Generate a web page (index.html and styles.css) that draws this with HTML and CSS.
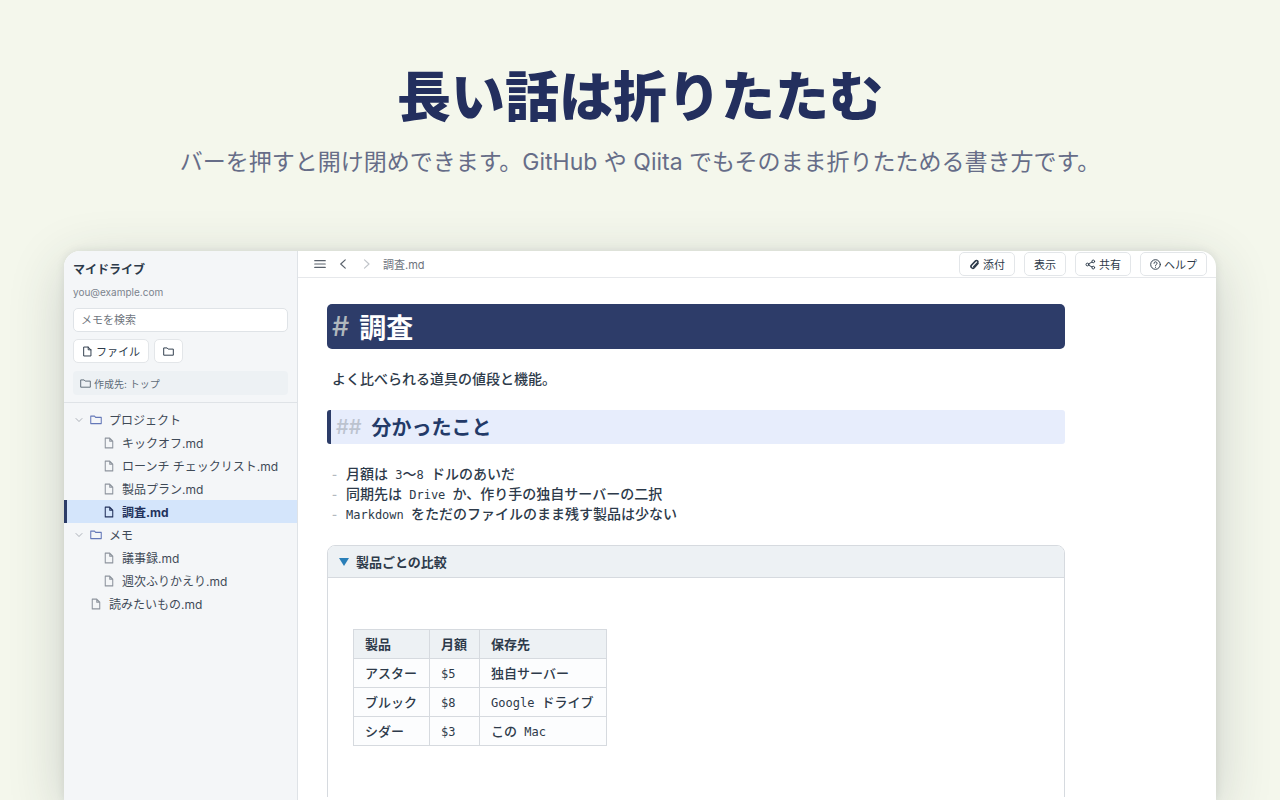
FILE: index.html
```html
<!DOCTYPE html>
<html lang="ja">
<head>
  <meta charset="UTF-8">
  <meta name="viewport" content="width=device-width, initial-scale=1.0">
  <title>長い話は折りたたむ</title>
  <link rel="stylesheet" href="styles.css">
</head>
<body>
  <svg class="sprite" aria-hidden="true">
    <symbol id="file" viewBox="0 0 16 16">
      <path d="M3 1.500h6l4 4v9h-10zM9 1.500v4h4"/>
    </symbol>
    <symbol id="folder" viewBox="0 0 16 16">
      <path d="M1 12.800v-10h5l1.500 1.700h7.500v8.300z"/>
    </symbol>
    <symbol id="down" viewBox="0 0 16 16">
      <path d="M2 5l6 6 6-6"/>
    </symbol>
  </svg>

  <header class="hero">
    <h1>長い話は折りたたむ</h1>
    <p>バーを押すと開け閉めできます。GitHub や Qiita でもそのまま折りたためる書き方です。</p>
  </header>

  <div class="app">
    <aside class="sidebar">
      <div class="sidebar-head">
        <h2 class="drive">マイドライブ</h2>
        <p class="email">you@example.com</p>
        <input class="search" type="search" placeholder="メモを検索" aria-label="メモを検索">
        <div class="actions">
          <button class="btn"><svg class="icon"><use href="#file"/></svg>ファイル</button>
          <button class="btn" aria-label="フォルダ"><svg class="icon"><use href="#folder"/></svg></button>
        </div>
        <p class="target"><svg class="icon"><use href="#folder"/></svg>作成先: トップ</p>
      </div>

      <nav class="tree">
        <a href="#" class="row folder"><svg class="caret"><use href="#down"/></svg><svg class="icon"><use href="#folder"/></svg>プロジェクト</a>
        <a href="#" class="row nested"><svg class="icon"><use href="#file"/></svg>キックオフ.md</a>
        <a href="#" class="row nested"><svg class="icon"><use href="#file"/></svg>ローンチ チェックリスト.md</a>
        <a href="#" class="row nested"><svg class="icon"><use href="#file"/></svg>製品プラン.md</a>
        <a href="#" class="row nested active"><svg class="icon"><use href="#file"/></svg>調査.md</a>
        <a href="#" class="row folder"><svg class="caret"><use href="#down"/></svg><svg class="icon"><use href="#folder"/></svg>メモ</a>
        <a href="#" class="row nested"><svg class="icon"><use href="#file"/></svg>議事録.md</a>
        <a href="#" class="row nested"><svg class="icon"><use href="#file"/></svg>週次ふりかえり.md</a>
        <a href="#" class="row root"><svg class="icon"><use href="#file"/></svg>読みたいもの.md</a>
      </nav>
    </aside>

    <main class="main">
      <div class="topbar">
        <button class="nav-btn" aria-label="メニュー"><svg viewBox="0 0 16 16"><path d="M1 3.500h14M1 8h14M1 12.500h14"/></svg></button>
        <button class="nav-btn" aria-label="戻る"><svg viewBox="0 0 16 16"><path d="M11 2.500l-6 5.500 6 5.500"/></svg></button>
        <button class="nav-btn" aria-label="進む" disabled><svg viewBox="0 0 16 16"><path d="M6 2.500l6 5.500-6 5.500"/></svg></button>
        <span class="crumb">調査.md</span>
        <div class="tools">
          <button class="btn"><svg class="icon" viewBox="0 0 16 16"><path class="clip" d="M13 6.500l-5.500 6.200a2.700 2.700 0 0 1-4-3.600l6-6.300a2 2 0 0 1 3 2.700l-5.500 5.700"/></svg>添付</button>
          <button class="btn">表示</button>
          <button class="btn"><svg class="icon" viewBox="0 0 16 16"><circle cx="3.500" cy="8" r="2"/><circle cx="12" cy="3.500" r="2"/><circle cx="12" cy="12.500" r="2"/><path d="M5.300 7l5-2.600M5.300 9l5 2.600"/></svg>共有</button>
          <button class="btn"><svg class="icon" viewBox="0 0 16 16"><circle cx="8" cy="8" r="7"/><path d="M5.800 6.300a2.200 2.200 0 1 1 3.300 1.900q-1.100.6-1.100 1.300M8 11.800v.4"/></svg>ヘルプ</button>
        </div>
      </div>

      <article class="doc">
        <h1><span class="mark">#</span> 調査</h1>
        <p>よく比べられる道具の値段と機能。</p>
        <h2><span class="mark">##</span> 分かったこと</h2>
        <ul>
          <li>月額は<code> 3</code>〜<code>8 </code>ドルのあいだ</li>
          <li>同期先は<code> Drive </code>か、作り手の独自サーバーの二択</li>
          <li><code>Markdown </code>をただのファイルのまま残す製品は少ない</li>
        </ul>
        <details open>
          <summary>製品ごとの比較</summary>
          <div class="details-body">
            <table>
              <thead>
                <tr><th>製品</th><th>月額</th><th>保存先</th></tr>
              </thead>
              <tbody>
                <tr><td>アスター</td><td><code>$5</code></td><td>独自サーバー</td></tr>
                <tr><td>ブルック</td><td><code>$8</code></td><td><code>Google </code>ドライブ</td></tr>
                <tr><td>シダー</td><td><code>$3</code></td><td>この<code> Mac</code></td></tr>
              </tbody>
            </table>
          </div>
        </details>
      </article>
    </main>
  </div>
</body>
</html>
```

FILE: styles.css
```css
* {
  box-sizing: border-box;
}

body {
  margin: 0;
  height: 100vh;
  display: flex;
  flex-direction: column;
  overflow: hidden;
  background: #f4f7ec;
  color: #2d3a4a;
  font-family: Inter, "Noto Sans CJK JP", sans-serif;
  font-size: 12px;
}

h1, h2, p, ul {
  margin: 0;
}

button, input {
  font: inherit;
  color: inherit;
}

svg {
  fill: none;
  stroke: currentColor;
  stroke-width: 1.4;
  stroke-linecap: round;
  stroke-linejoin: round;
  flex: none;
}

.sprite {
  display: none;
}

.icon {
  width: 11px;
  height: 11px;
}

/* hero */

.hero {
  padding: 62px 64px 0;
  text-align: center;
}

.hero h1 {
  font-size: 54px;
  line-height: 72px;
  font-weight: 800;
  color: #232f5e;
}

.hero p {
  margin-top: 10px;
  font-size: 23px;
  line-height: 36px;
  color: #666d88;
}

/* window */

.app {
  flex: 1;
  min-height: 0;
  margin: 71px 64px 0;
  display: flex;
  overflow: hidden;
  background: #fff;
  border-radius: 16px 16px 0 0;
  box-shadow: 0 0 8px rgba(40, 50, 60, 0.1), 0 14px 56px rgba(40, 50, 60, 0.2);
}

.sidebar {
  width: 234px;
  flex: none;
  background: #f4f6f8;
  border-right: 1px solid #dfe3e7;
}

.sidebar-head {
  padding: 10px 9px 7px;
  border-bottom: 1px solid #dfe3e7;
}

.drive {
  font-size: 12px;
  line-height: 18px;
}

.email {
  margin-top: 5px;
  font-size: 10px;
  line-height: 16px;
  color: #7b838d;
}

.search {
  display: block;
  width: 100%;
  height: 24px;
  margin-top: 8px;
  padding: 0 7px;
  border: 1px solid #dfe3e7;
  border-radius: 5px;
  background: #fff;
  font-size: 11px;
}

.search::placeholder {
  color: #70767e;
}

.actions {
  display: flex;
  gap: 5px;
  margin: 7px 0 8px;
}

.btn {
  height: 24px;
  display: flex;
  align-items: center;
  gap: 3px;
  padding: 0 8px;
  border: 1px solid #e3e6e9;
  border-radius: 5px;
  background: #fff;
  font-size: 11px;
  white-space: nowrap;
}

.target {
  display: flex;
  align-items: center;
  gap: 3px;
  height: 24px;
  padding: 0 7px;
  border-radius: 4px;
  background: #edf1f4;
  color: #5f6b78;
  font-size: 10px;
}

.tree {
  padding-top: 5px;
}

.row {
  display: flex;
  align-items: center;
  gap: 7px;
  height: 23px;
  border-left: 3px solid transparent;
  color: #3f4a57;
  text-decoration: none;
}

.row .icon {
  width: 12px;
  height: 12px;
  color: #8d949d;
}

.folder {
  padding-left: 8px;
}

.folder .icon {
  color: #6478b8;
}

.row .caret {
  width: 8px;
  height: 8px;
  color: #8d949d;
}

.root {
  padding-left: 23px;
}

.nested {
  padding-left: 36px;
}

.active,
.active .icon {
  color: #22325c;
}

.active {
  background: #d4e5fb;
  border-left-color: #2c3c68;
  font-weight: 700;
}

/* editor */

.main {
  flex: 1;
  min-width: 0;
  display: flex;
  flex-direction: column;
  padding-bottom: 3px;
}

.topbar {
  display: flex;
  align-items: center;
  gap: 11px;
  flex: none;
  height: 27px;
  padding: 0 9px 0 16px;
  border-bottom: 1px solid #e6e8eb;
}

.nav-btn {
  display: flex;
  padding: 0;
  border: 0;
  background: none;
  color: #59616b;
}

.nav-btn svg {
  width: 12px;
  height: 12px;
  stroke-width: 1.6;
}

.nav-btn:disabled {
  color: #c0c4c9;
}

.crumb {
  font-size: 11px;
  color: #6d747d;
}

.tools {
  display: flex;
  gap: 9px;
  margin-left: auto;
}

.tools .btn {
  padding: 0 9px;
}

.clip {
  stroke-width: 2.4;
}

.doc {
  flex: 1;
  min-height: 0;
  overflow: hidden;
  max-width: 796px;
  padding: 26px 29px 0;
  font-family: "Noto Sans CJK JP", sans-serif;
  font-size: 14px;
  line-height: 20px;
  font-weight: 500;
}

.doc h1,
.doc h2 {
  display: flex;
  align-items: center;
  gap: 10px;
  padding: 0 5px;
}

.doc h1 {
  border-radius: 5px;
  background: #2d3c69;
  color: #fff;
  font-size: 27px;
  line-height: 45px;
}

.mark {
  font-family: Inter, sans-serif;
  font-weight: 500;
}

.doc h1 .mark {
  color: #b0b8bd;
}

.doc p {
  margin: 19px 5px 22px;
}

.doc h2 {
  border-left: 4px solid #2c3c68;
  border-radius: 3px;
  background: #e7edfc;
  color: #233a68;
  font-size: 20px;
  line-height: 34px;
}

.doc h2 .mark {
  color: #bcc3cf;
}

.doc code {
  font-family: "DejaVu Sans Mono", monospace;
  font-size: 12px;
  font-weight: 400;
  white-space: pre;
}

.doc ul {
  margin: 19px 5px 22px;
  padding: 0;
  list-style: none;
}

.doc li {
  display: flex;
  align-items: baseline;
  height: 20px;
}

.doc li::before {
  content: "-";
  width: 14px;
  color: #b3b9c0;
}

details {
  height: 400px;
  border: 1px solid #d6dadf;
  border-radius: 8px;
  overflow: hidden;
}

summary {
  display: flex;
  align-items: center;
  gap: 7px;
  height: 32px;
  padding: 0 11px;
  border-bottom: 1px solid #d6dadf;
  background: #edf1f4;
  font-size: 13px;
  font-weight: 700;
}

summary::before {
  content: "";
  border: 5px solid transparent;
  border-top: 8px solid #2a7fb8;
  border-bottom: 0;
}

.details-body {
  padding: 51px 25px;
}

table {
  border-collapse: collapse;
  font-size: 13px;
}

th, td {
  height: 29px;
  padding: 0 12px 0 11px;
  border: 1px solid #d6dadf;
  text-align: left;
}

th {
  background: #edf1f4;
}

td {
  background: #fcfdfe;
}
```
